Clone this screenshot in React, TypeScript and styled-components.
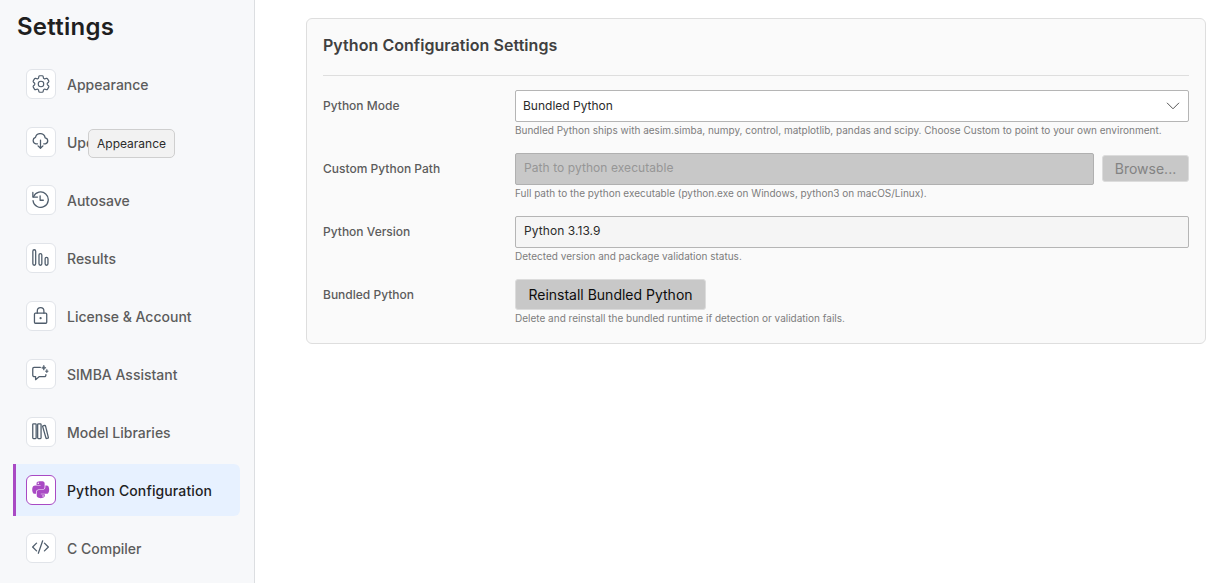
import React from "react";
import styled, { createGlobalStyle } from "styled-components";
import { HiOutlineCog6Tooth } from "react-icons/hi2";
import { FaPython } from "react-icons/fa";

const GlobalStyle = createGlobalStyle`
  *, *::before, *::after { box-sizing: border-box; }
  body {
    margin: 0;
    background: #ffffff;
    font-family: Inter, "Liberation Sans", sans-serif;
    overflow: hidden;
  }
`;

const Page = styled.div`
  display: flex;
  height: 583px;
  width: 100%;
`;

const Sidebar = styled.aside`
  width: 255px;
  flex: none;
  background: #f7f8fa;
  border-right: 1px solid #dcdee1;
  padding: 10px 14px 0 13px;
`;

const Title = styled.h1`
  margin: 0 0 15px 4px;
  font-size: 24px;
  line-height: 33px;
  font-weight: 600;
  letter-spacing: 0.25px;
  color: #1f1f1f;
`;

const Nav = styled.nav`
  display: flex;
  flex-direction: column;
  gap: 6px;
`;

const NavItem = styled.a<{ $active?: boolean }>`
  position: relative;
  display: flex;
  align-items: center;
  gap: 11px;
  height: 52px;
  padding-left: 10px;
  border-left: 3px solid ${(p) => (p.$active ? "#a94ac4" : "transparent")};
  border-radius: 0 6px 6px 0;
  background: ${(p) => (p.$active ? "#e7f1ff" : "transparent")};
  color: ${(p) => (p.$active ? "#1f1f1f" : "#5c5c5c")};
  font-size: 14px;
  font-weight: 500;
  letter-spacing: ${(p) => (p.$active ? "0.12px" : "0")};
  white-space: nowrap;
`;

const IconBox = styled.span<{ $active?: boolean }>`
  display: flex;
  align-items: center;
  justify-content: center;
  width: 30px;
  height: 30px;
  padding: 0 1px 1px 0;
  border: 1px solid ${(p) => (p.$active ? "#a94ac4" : "#e1e4e9")};
  border-radius: 6px;
  background: #ffffff;
  color: ${(p) => (p.$active ? "#a94ac4" : "#4f5d6c")};
  svg { flex: none; display: block; }
`;

const Tooltip = styled.span`
  position: absolute;
  left: 72px;
  top: 13px;
  height: 29px;
  padding: 0 8px;
  line-height: 27px;
  border: 1px solid #cfcfcf;
  border-radius: 5px;
  background: #f2f2f2;
  color: #2b2b2b;
  font-size: 12px;
  font-weight: 400;
`;

const Main = styled.main`
  flex: 1;
  min-width: 0;
  padding: 18px 17px 0 51px;
`;

const Card = styled.section`
  height: 326px;
  padding: 0 16px;
  border: 1px solid #dedede;
  border-radius: 6px;
  background: #fafafa;
`;

const CardTitle = styled.h2`
  margin: 0 0 14px;
  height: 57px;
  line-height: 53px;
  border-bottom: 1px solid #dedede;
  font-size: 16px;
  font-weight: 600;
  letter-spacing: 0.05px;
  color: #404040;
`;

const Row = styled.div`
  display: grid;
  grid-template-columns: 192px 1fr;
  height: 63px;
`;

const RowLabel = styled.label`
  line-height: 31px;
  font-size: 12px;
  font-weight: 500;
  color: #5c5c5c;
`;

const Controls = styled.div`
  display: flex;
  align-items: center;
  gap: 8px;
`;

const Hint = styled.p`
  margin: 0;
  line-height: 17px;
  font-size: 10px;
  color: #7d7d7d;
  white-space: nowrap;
`;

const Field = styled.div<{ $kind: "select" | "disabled" | "readonly" }>`
  flex: 1;
  display: flex;
  align-items: center;
  justify-content: space-between;
  height: 32px;
  padding: 0 8px ${(p) => (p.$kind === "select" ? 1 : 3)}px
    ${(p) => (p.$kind === "select" ? 7 : 8)}px;
  border: 1px solid ${(p) => (p.$kind === "disabled" ? "#b0b0b0" : "#b5b5b5")};
  border-radius: 2px;
  background: ${(p) =>
    ({ select: "#ffffff", disabled: "#c8c8c8", readonly: "#f5f5f5" })[p.$kind]};
  color: ${(p) => (p.$kind === "disabled" ? "#969696" : "#2b2b2b")};
  font-size: 12px;
  letter-spacing: ${(p) => (p.$kind === "select" ? "0" : "0.07px")};
`;

const Button = styled.button<{ $disabled?: boolean }>`
  height: ${(p) => (p.$disabled ? 27 : 31)}px;
  width: ${(p) => (p.$disabled ? 87 : 191)}px;
  margin-bottom: ${(p) => (p.$disabled ? 1 : 0)}px;
  padding: 0;
  border: 1px solid #dcdcdc;
  border-radius: 3px;
  background: #c8c8c8;
  color: ${(p) => (p.$disabled ? "#838383" : "#0d0d0d")};
  font-family: inherit;
  font-size: 14px;
  white-space: nowrap;
`;

const LineIcon = ({ children }: { children: React.ReactNode }) => (
  <svg
    width="17"
    height="17"
    viewBox="0 0 18 18"
    fill="none"
    stroke="currentColor"
    strokeWidth="1.35"
    strokeLinecap="round"
    strokeLinejoin="round"
  >
    {children}
  </svg>
);

const CloudDownload = () => (
  <LineIcon>
    <path d="M5.800 11.400H4.200A3.500 3.500 0 0 1 3.700 4.600 5.200 5.200 0 0 1 13.900 5.100a3.200 3.200 0 0 1 .2 6.300h-1.700" />
    <path d="M9 7.500v8.600M6.400 13.600 9 16.200 11.600 13.600" />
  </LineIcon>
);

const History = () => (
  <LineIcon>
    <path d="M1.600 6.200A8.100 8.100 0 1 1 1.100 10.200" />
    <path d="M.9 1.500v4.900h4.900M8.600 5.100v4.700h3.400" />
  </LineIcon>
);

const Bars = () => (
  <LineIcon>
    <rect x=".9" y=".8" width="3" height="16.400" rx="1.500" />
    <rect x="7.400" y="4.800" width="3" height="12.400" rx="1.500" />
    <rect x="13.900" y="8.800" width="3" height="8.400" rx="1.500" />
  </LineIcon>
);

const Lock = () => (
  <LineIcon>
    <rect x="2.600" y="6.600" width="13" height="10.600" rx="1" />
    <path d="M5.600 6.600V4.200a3.500 3.500 0 0 1 7 0v2.400" />
    <circle cx="9.100" cy="11.800" r=".5" fill="currentColor" />
  </LineIcon>
);

const ChatSparkle = () => (
  <LineIcon>
    <path d="M8.800 2.600H2.200A1.500 1.500 0 0 0 .8 4.100v6.700a1.500 1.500 0 0 0 1.500 1.500h1.500v3.200l4-3.200h5.400a1.500 1.500 0 0 0 1.500-1.500v-.5" />
    <path
      d="M12.500.5q.3 2.200 2.400 2.500-2.100.3-2.400 2.500-.3-2.200-2.400-2.500 2.100-.3 2.400-2.500zM15.700 4.900q.2 1.500 1.600 1.700-1.400.2-1.600 1.700-.2-1.500-1.600-1.700 1.400-.2 1.600-1.700z"
      fill="currentColor"
      strokeWidth=".6"
    />
  </LineIcon>
);

const Books = () => (
  <LineIcon>
    <rect x=".8" y=".9" width="3.600" height="15.600" rx=".8" />
    <rect x="6" y=".9" width="3.600" height="15.600" rx=".8" />
    <path d="M11.600 3l1.900-.5q.6-.1.800.500l3 12.300q.1.600-.5.800l-1.200.3q-.6.100-.8-.5L11.300 3.800q-.1-.6.300-.8z" />
  </LineIcon>
);

const Code = () => (
  <LineIcon>
    <path d="M4.800 4.400.7 8.500l4.100 4.100M13.200 4.400l4.100 4.100-4.100 4.100M11.300 1.900 6.700 15.100" />
  </LineIcon>
);

const Chevron = () => (
  <svg width="14" height="8" viewBox="0 0 14 8" fill="none" stroke="#555555">
    <path d="M1 .8 7 6.800 13 .8" />
  </svg>
);

const items = [
  { label: "Appearance", icon: <HiOutlineCog6Tooth size={22} strokeWidth={1.25} /> },
  { label: "Updates", icon: <CloudDownload />, tooltip: "Appearance" },
  { label: "Autosave", icon: <History /> },
  { label: "Results", icon: <Bars /> },
  { label: "License & Account", icon: <Lock /> },
  { label: "SIMBA Assistant", icon: <ChatSparkle /> },
  { label: "Model Libraries", icon: <Books /> },
  { label: "Python Configuration", icon: <FaPython size={19.4} />, active: true },
  { label: "C Compiler", icon: <Code /> },
];

export default function App() {
  return (
    <Page>
      <GlobalStyle />
      <Sidebar>
        <Title>Settings</Title>
        <Nav>
          {items.map((item) => (
            <NavItem key={item.label} $active={item.active}>
              <IconBox $active={item.active}>{item.icon}</IconBox>
              <span>{item.label}</span>
              {item.tooltip && <Tooltip>{item.tooltip}</Tooltip>}
            </NavItem>
          ))}
        </Nav>
      </Sidebar>
      <Main>
        <Card>
          <CardTitle>Python Configuration Settings</CardTitle>
          <Row>
            <RowLabel>Python Mode</RowLabel>
            <div>
              <Controls>
                <Field $kind="select">
                  Bundled Python
                  <Chevron />
                </Field>
              </Controls>
              <Hint>
                Bundled Python ships with aesim.simba, numpy, control, matplotlib, pandas and
                scipy. Choose Custom to point to your own environment.
              </Hint>
            </div>
          </Row>
          <Row>
            <RowLabel>Custom Python Path</RowLabel>
            <div>
              <Controls>
                <Field $kind="disabled">Path to python executable</Field>
                <Button $disabled>Browse...</Button>
              </Controls>
              <Hint>
                Full path to the python executable (python.exe on Windows, python3 on
                macOS/Linux).
              </Hint>
            </div>
          </Row>
          <Row>
            <RowLabel>Python Version</RowLabel>
            <div>
              <Controls>
                <Field $kind="readonly">Python 3.13.9</Field>
              </Controls>
              <Hint>Detected version and package validation status.</Hint>
            </div>
          </Row>
          <Row>
            <RowLabel>Bundled Python</RowLabel>
            <div>
              <Controls>
                <Button>Reinstall Bundled Python</Button>
              </Controls>
              <Hint>Delete and reinstall the bundled runtime if detection or validation fails.</Hint>
            </div>
          </Row>
        </Card>
      </Main>
    </Page>
  );
}
